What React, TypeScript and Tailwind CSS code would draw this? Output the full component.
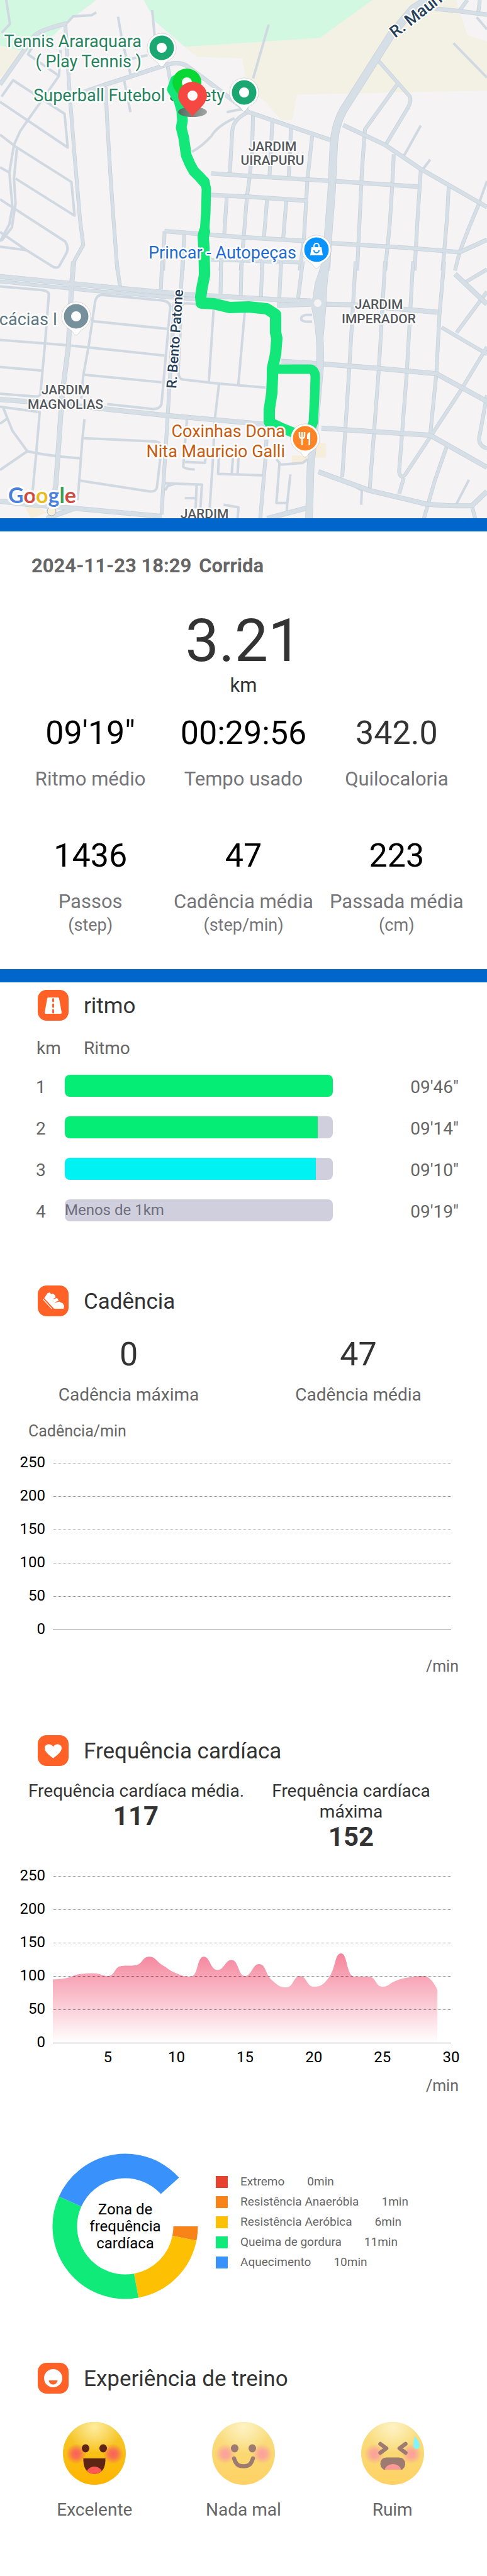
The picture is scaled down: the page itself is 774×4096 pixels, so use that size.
import type { ReactNode } from "react";

type Point = [number, number];

/* ---------- Map ---------- */

const northMinor = [
  "M20 0L32 140L5 190",
  "M310 72L295 88L235 95L215 135",
  "M380 97L395 250L420 430",
  "M490 58L498 210",
  "M865 143L815 455",
  "M400 470L420 650",
  "M0 590L218 855L208 660L42 465L5 560",
  "M0 780L50 850L230 1055L240 1250L50 1035",
  "M0 1155L210 1400Q225 1440 210 1480L190 1545Q180 1560 165 1540L85 1450L0 1345",
  "M0 1430L85 1450",
  "M195 290L190 440L65 760L45 840L30 1000L40 1200L30 1300L0 1400",
  "M190 440L90 315L115 240",
  "M0 970L30 1000",
  "M55 850L45 1035L50 1180L38 1320L5 1395",
  "M755 685Q700 730 680 790Q650 850 618 880",
  "M730 650L800 625",
  "M1355 727L1300 905",
  "M1385 925L1360 985",
  "M1460 250L1568 450",
  "M1568 1050L1545 1165",
  "M1535 100L1568 170",
  "M425 340L475 320",
];

const northStreets = [
  "M210 135L225 560L240 900L258 1280L268 1420L240 1510L235 1568",
  "M340 505L345 700L355 1000L365 1260L378 1568",
  "M540 385L550 480",
  "M815 650L812 850L805 1015L795 1140L785 1370L775 1568",
  "M800 650Q750 690 748 760L740 1000",
  "M877 700L868 1015",
  "M937 740L930 1020",
  "M1005 790L990 1040L978 1400L965 1568",
  "M730 1145L722 1360",
  "M860 1155L850 1375",
  "M922 1160L912 1380",
  "M530 1340L525 1568",
  "M593 1355L588 1568",
  "M680 1505L965 1522",
  "M712 1510L710 1568",
  "M845 1515L843 1568",
  "M905 1520L903 1568",
  "M1215 345L1320 560Q1325 580 1315 620L1240 845",
  "M1283 480L1175 750L1165 1000L1160 1200L1150 1568",
  "M1268 895L1262 1100L1255 1300L1240 1568",
  "M1355 985L1345 1250L1335 1568",
  "M1445 1070L1440 1250L1425 1568",
  "M1545 1170L1510 1320L1480 1460L1465 1568",
  "M1505 0L1480 60",
  "M1545 0L1540 70",
];

const northAvenues = [
  "M0 490L110 210Q125 175 215 135",
  "M260 540L340 490L520 385Q570 350 600 380L660 460L800 650L1070 815",
  "M680 1005L800 1020L1060 1048L1345 1082",
  "M680 1130L800 1140L985 1163",
  "M530 1340L780 1375L970 1395L1070 1410L1300 1435L1480 1462L1568 1390",
  "M1105 725L1240 840L1355 980L1568 1200",
  "M1400 50L1480 65L1568 85",
];

const northMajor = [
  "M1400 -30L1330 50L1260 200L1200 370L1105 640Q1080 720 1075 830L1068 1100L1055 1400L1050 1568",
];

const southMinor = [
  "M0 140L130 160Q160 165 157 190L145 460L130 745Q128 760 110 757L0 742",
  "M305 240Q308 185 330 188L520 218Q550 225 548 260L520 800Q515 830 490 828L345 800",
  "M305 240L285 480L268 640L262 770",
  "M300 335L537 378",
  "M0 440L220 470L530 528",
  "M270 635L520 678",
  "M0 592L135 612",
  "M640 240L600 235Q585 235 585 260L575 620Q575 660 590 663L700 685L855 708",
  "M688 265L672 685",
  "M788 285L767 700",
  "M705 690L692 880L685 1130L675 1390",
  "M0 815L128 845L116 1087L105 1290",
  "M10 820L40 950L88 1065Q150 1090 260 1105",
  "M88 1065L0 1170",
  "M0 910L25 880",
  "M272 885L265 1000L255 1230L250 1340",
  "M270 992L500 1010Q520 1012 520 1050L505 1270Q500 1295 480 1290L258 1230",
  "M602 885L590 1150Q590 1165 627 1167",
  "M595 1125L660 1130L663 1080",
  "M530 1245L650 1252L645 1395",
  "M532 1285L540 1260L560 1250",
  "M633 1255L630 1385",
  "M595 1328L628 1328",
  "M705 1080L702 1192L845 1200",
  "M750 1100L746 1195",
  "M768 1100L765 1195",
  "M720 1365L768 1380L765 1442",
  "M890 1110L905 1140L975 1130L990 1110",
  "M935 1195L925 1355L890 1355L900 1130",
  "M925 1355L923 1410",
  "M1005 300L985 300Q968 305 970 325Q972 340 1005 338",
  "M1510 1225L1470 1360",
  "M1130 1250L1165 1285L1163 1365",
];

const southStreets = [
  "M375 0L388 160",
  "M522 0L518 155",
  "M588 0L582 175",
  "M712 0L710 190",
  "M778 0L775 195",
  "M845 0L840 200",
  "M905 0L898 260",
  "M975 0L960 205",
  "M858 1000L855 1100L838 1442",
  "M0 112L300 165L640 215",
  "M1145 0L1125 590L1102 1210",
  "M1240 0L1220 600L1190 1285",
  "M1330 0L1310 620L1285 1180Q1290 1225 1305 1195L1385 985L1485 720L1568 480",
  "M1430 0L1415 300L1405 630L1385 975",
  "M1300 1215L1285 1305",
  "M1500 115L1568 45",
  "M1568 170L1470 400",
  "M1422 370L1568 520",
  "M1568 750L1545 970Q1535 1030 1568 1050",
  "M1440 1030L1400 1230L1365 1442",
  "M1520 1375L1530 1442",
  "M562 230L540 865L520 1420",
];

const southAvenues = [
  "M237 0L230 150L220 480L200 750L180 1250L165 1400",
  "M0 85L380 150L600 185L900 215L1000 222",
  "M900 245L1000 240",
  "M1050 240L1130 243L1410 285",
  "M0 775L200 800L350 830L540 865L860 915",
  "M0 1345L100 1365L240 1385L520 1430",
  "M240 1385L150 1442",
  "M860 1442L985 1385",
  "M905 560L1040 575L1220 600L1405 630L1568 785",
  "M1035 935L1200 955L1385 975L1568 1155",
  "M1465 70L1568 240",
  "M1025 1180L1190 1285L1370 1360Q1440 1375 1520 1370L1568 1290",
];

const southMajor = [
  "M1050 0L1025 130L1015 260Q1035 400 1030 600L1015 900L1000 1150L995 1442",
  "M1050 0L1042 130L1038 260L1030 420",
];

function Roads({ paths, width, cased }: { paths: string[]; width: number; cased?: boolean }) {
  return (
    <g fill="none" strokeLinejoin="round" strokeLinecap="butt">
      {cased &&
        paths.map((d) => (
          <path key={d} d={d} stroke="#c6d1db" strokeWidth={width + 1} vectorEffect="non-scaling-stroke" />
        ))}
      {paths.map((d) => (
        <path
          key={d}
          d={d}
          stroke={cased ? "#d6dfe6" : "#d0d9e1"}
          strokeWidth={cased ? width - 0.5 : width}
          vectorEffect="non-scaling-stroke"
        />
      ))}
    </g>
  );
}

function Poi({ x, y, color, children }: { x: number; y: number; color: string; children?: ReactNode }) {
  return (
    <g transform={`translate(${x} ${y})`}>
      <path
        d="M0 30C-2 30 -4 27 -6 24C-9 20 -23 16 -23 0A23 23 0 0 1 23 0C23 16 9 20 6 24C4 27 2 30 0 30Z"
        fill="#fff"
        stroke="#00000022"
      />
      <circle r="19.5" fill={color} />
      {children ?? <circle r="8" fill="#fff" />}
    </g>
  );
}

function Marker({ x, y, color }: { x: number; y: number; color: string }) {
  return (
    <g transform={`translate(${x} ${y})`}>
      <path d="M0 33C-3 25 -23 14 -23 -1A23 22 0 0 1 23 -1C23 14 3 25 0 33Z" fill={color} />
      <circle r="8" cy="-1" fill="#fff" />
    </g>
  );
}

function RouteMap() {
  return (
    <svg viewBox="0 0 774 824" className="block w-full" role="img" aria-label="Percurso da corrida">
      <defs>
        <linearGradient id="pinShadow">
          <stop offset="0" stopColor="#4d6d5c" />
          <stop offset="1" stopColor="#a5a5a5" />
        </linearGradient>
      </defs>
      <rect width="774" height="824" fill="#f5f3f4" />
      <g transform="scale(.4936 .2743)">
        <path d="M595 272L1030 220L1195 0H1568V525L957 548L940 695L905 695L860 600L795 500L780 338L635 330Z" fill="#f3f0e4" />
        <path d="M1470 0H1568V240L1505 205L1480 70Z" fill="#f5f3f4" />
        <path d="M463 0H1200L1030 220L595 272L500 125Z" fill="#d2f8e1" />
        <path d="M0 270L85 290L0 450Z" fill="#f3f0e4" />
        <path d="M0 0H310L215 130L175 200L85 300L0 265Z" fill="#d2f8e1" />
        <Roads paths={northMinor} width={4} />
        <Roads paths={northStreets} width={5} cased />
        <Roads paths={northAvenues} width={6} cased />
        <Roads paths={northMajor} width={12} cased />
      </g>
      <g transform="translate(0 415.7) scale(.4936 .2834)">
        <path d="M990 1020H1050V1100H1010V1130H940V1090H990Z" fill="#f6edda" />
        <path d="M80 1375L130 1385L150 1410L100 1442Z" fill="#f6edda" />
        <Roads paths={southMinor} width={4} />
        <Roads paths={southStreets} width={5} cased />
        <Roads paths={southAvenues} width={7} cased />
        <Roads paths={southMajor} width={11} cased />
      </g>
      <circle cx="505" cy="482" r="9" fill="#f5f3f4" stroke="#d6dfe6" strokeWidth="6" />
      <circle cx="82" cy="813" r="7" fill="#f6edda" stroke="#a9b2b8" />

      <g
        fontFamily="Roboto, sans-serif"
        fontSize="27"
        textAnchor="end"
        stroke="#fff"
        strokeWidth="5"
        strokeLinejoin="round"
        paintOrder="stroke"
      >
        <text x="225" y="75" fill="#27835e">Tennis Araraquara</text>
        <text x="225" y="107" fill="#27835e">( Play Tennis )</text>
        <text x="357" y="161" fill="#27835e">Superball Futebol Society</text>
      </g>

      <g fill="none" stroke="#14e779" strokeLinejoin="round" strokeLinecap="round">
        <path
          d="M279 128L274 142L284 158L289 176L290 192L288 203L292 219L296 247L302 261L308 272L317 281L325 290"
          strokeWidth="17"
        />
        <path d="M325 288L328 300L327 340L325 368" strokeWidth="15" />
        <path
          d="M325 368L323 376L324 392L325 430L325 438L321 458L319 472L320 482L340 483L365 489L395 488L424 491L438 500L438 529L440 538L438 563L433 586L433 600L432 625L428 651L428 671"
          strokeWidth="18"
        />
        <path d="M428 671L449 681L474 691" strokeWidth="16" />
        <path d="M435 587L493 587Q501 588 501 600L500 631L498 671L494 682" strokeWidth="15" />
      </g>

      <g
        fontFamily="Roboto, sans-serif"
        fontSize="27"
        textAnchor="end"
        stroke="#fff"
        strokeWidth="5"
        strokeLinejoin="round"
        paintOrder="stroke"
      >
        <text x="471" y="411" fill="#1f6bd0">Princar - Autopeças</text>
        <text x="91" y="517" fill="#5c7580">cácias I</text>
        <text x="453" y="695" fill="#c75b10">Coxinhas Dona</text>
        <text x="453" y="727" fill="#c75b10">Nita Mauricio Galli</text>
      </g>
      <g
        fontFamily="Roboto, sans-serif"
        fontSize="21"
        fontWeight="500"
        fill="#54575b"
        textAnchor="middle"
        stroke="#fff"
        strokeWidth="4"
        strokeLinejoin="round"
        paintOrder="stroke"
      >
        <text x="433" y="240">JARDIM</text>
        <text x="433" y="262">UIRAPURU</text>
        <text x="602" y="491">JARDIM</text>
        <text x="602" y="514">IMPERADOR</text>
        <text x="104" y="627">JARDIM</text>
        <text x="104" y="650">MAGNOLIAS</text>
        <text x="325" y="824">JARDIM</text>
      </g>
      <g
        fontFamily="Roboto, sans-serif"
        fontWeight="500"
        fill="#26405a"
        stroke="#fff"
        strokeWidth="4"
        strokeLinejoin="round"
        paintOrder="stroke"
      >
        <text transform="translate(628 61) rotate(-38)" fontSize="26">R. Maurício</text>
        <text transform="translate(280 618) rotate(-86)" fontSize="22">R. Bento Patone</text>
      </g>

      <Poi x={257} y={76} color="#1aa772" />
      <Poi x={388} y={147} color="#1aa772" />
      <Poi x={121} y={503} color="#76909c" />
      <Poi x={503} y={397} color="#0a93ff">
        <path d="M-8 -4H8L10 9H-10Z" fill="#fff" />
        <path d="M-4 -4V-6A4 4 0 0 1 4 -6V-4" fill="none" stroke="#fff" strokeWidth="2" />
        <path d="M-4 1A4 4 0 0 0 4 1" fill="none" stroke="#0a93ff" strokeWidth="2" />
      </Poi>
      <Poi x={485} y={697} color="#ff8426">
        <path d="M-9 -10V-4Q-9 0 -5 0Q-1 0 -1 -4V-10M-5 -10V11" fill="none" stroke="#fff" strokeWidth="2.4" />
        <path d="M8 11H5.500V1H3V-4Q3 -9 8 -10Z" fill="#fff" />
      </Poi>

      <Marker x={297} y={132} color="#09d834" />
      <ellipse cx="306" cy="178" rx="23" ry="8" fill="url(#pinShadow)" />
      <Marker x={306} y={153} color="#f54843" />

      <text
        x="13"
        y="800"
        fontFamily="Lato, sans-serif"
        fontWeight="700"
        fontSize="34"
        stroke="#fff"
        strokeWidth="6"
        strokeLinejoin="round"
        paintOrder="stroke"
      >
        <tspan fill="#4a80dd">G</tspan>
        <tspan fill="#d04a41">o</tspan>
        <tspan fill="#eabb1e">o</tspan>
        <tspan fill="#4a80dd">g</tspan>
        <tspan fill="#3ba05a">l</tspan>
        <tspan fill="#d04a41">e</tspan>
      </text>
    </svg>
  );
}

/* ---------- Shared parts ---------- */

function SectionTitle({ icon, children }: { icon: ReactNode; children: ReactNode }) {
  return (
    <div className="flex items-center gap-6 pl-[60px]">
      <svg viewBox="0 0 49 49" className="size-[49px] rounded-[14px] bg-[#ff6127]" aria-hidden="true">
        {icon}
      </svg>
      <h2 className="pt-[2px] text-[35px] leading-[47px] text-[#333]">{children}</h2>
    </div>
  );
}

function Divider() {
  return <div className="h-[21px] bg-[#0066cc]" />;
}

const roadIcon = (
  <>
    <path d="M17 12H32Q34 12 34 14L38 36Q38 38 36 38H13Q11 38 11 36L15 14Q15 12 17 12Z" fill="#fff" />
    <path d="M24.500 14.500V18M24.500 23V27M24.500 32V36" stroke="#ff6127" strokeWidth="3" strokeLinecap="round" />
  </>
);

const shoeIcon = (
  <g transform="scale(.239) translate(-10 -14)">
    <path
      d="M56 98L76 68L88 63L98 74L112 71L122 80L126 92L112 100L113 108L138 100L146 114L120 124L121 132L152 124L176 136L183 150L180 166L120 166Z"
      fill="#fff"
      stroke="#fff"
      strokeWidth="5"
      strokeLinejoin="round"
    />
    <path d="M47 107L103 168" stroke="#fff" strokeWidth="5" strokeLinecap="round" />
  </g>
);

const heartIcon = (
  <path
    d="M24.500 37C22 34 11 28 11 20.500C11 17 14 14.500 17.500 14.500C20.500 14.500 23 16 24.500 18.500C26 16 28.500 14.500 31.500 14.500C35 14.500 38 17 38 20.500C38 28 27 34 24.500 37Z"
    fill="#fff"
  />
);

const smileIcon = (
  <>
    <circle cx="24.500" cy="24.500" r="14.500" fill="#fff" />
    <path d="M17.500 28H31.500C31 32 28 34.500 24.500 34.500S18 32 17.500 28Z" fill="#ff6127" />
  </>
);

/* ---------- Charts ---------- */

const heartRate = [
  95, 97, 103, 104, 100, 115, 116, 129, 116, 104, 99, 129, 109, 124, 100, 118, 93, 83, 100, 84, 95, 134, 99, 99, 84,
  93, 98, 100, 79,
];

const clamp = (v: number, a: number, b: number) => Math.max(Math.min(a, b), Math.min(Math.max(a, b), v));

function smoothLine(points: Point[]) {
  let d = `M${points[0][0]} ${points[0][1]}`;
  let out: Point = points[0];
  for (let i = 1; i < points.length; i++) {
    const prev = points[i - 1];
    const cur = points[i];
    const next = points[i + 1];
    let into: Point = cur;
    let nextOut: Point = cur;
    if (next) {
      const lenPrev = Math.hypot(cur[0] - prev[0], cur[1] - prev[1]);
      const lenNext = Math.hypot(next[0] - cur[0], next[1] - cur[1]);
      const ratio = lenNext / (lenNext + lenPrev);
      const vx = (next[0] - prev[0]) * 0.5;
      const vy = (next[1] - prev[1]) * 0.5;
      nextOut = [clamp(cur[0] + vx * ratio, cur[0], next[0]), clamp(cur[1] + vy * ratio, cur[1], next[1])];
      into = [
        clamp(cur[0] - ((nextOut[0] - cur[0]) * lenPrev) / lenNext, prev[0], cur[0]),
        clamp(cur[1] - ((nextOut[1] - cur[1]) * lenPrev) / lenNext, prev[1], cur[1]),
      ];
      nextOut = [
        cur[0] + ((cur[0] - into[0]) * lenNext) / lenPrev,
        cur[1] + ((cur[1] - into[1]) * lenNext) / lenPrev,
      ];
    }
    d += `C${out[0]} ${out[1]} ${into[0]} ${into[1]} ${cur[0]} ${cur[1]}`;
    out = nextOut;
  }
  return d;
}

function Chart({ label, data, ticks = [] }: { label: string; data?: number[]; ticks?: number[] }) {
  const left = 84;
  const right = 717;
  const base = 300;
  const y = (v: number) => base - (v * 265) / 250;
  const x = (minute: number) => left + ((minute - 1) * (right - left)) / 29;
  const line = data && smoothLine(data.map((v, i): Point => [x(i + 1), y(v)]));
  return (
    <svg viewBox="0 0 774 340" className="block w-full" role="img" aria-label={label}>
      <defs>
        <linearGradient id="rateFill" x1="0" y1="0" x2="0" y2="1">
          <stop offset="0" stopColor="#f5849c" />
          <stop offset="1" stopColor="#fff" />
        </linearGradient>
      </defs>
      {line && <path d={`${line}V${base}H${left}Z`} fill="url(#rateFill)" />}
      <g fontFamily="Roboto, sans-serif" fontSize="24">
        {[250, 200, 150, 100, 50, 0].map((v) => (
          <g key={v}>
            <line
              x1={left}
              x2={right}
              y1={y(v) + 0.5}
              y2={y(v) + 0.5}
              stroke={v ? "#00000070" : "#999"}
              strokeDasharray={v ? "1 1" : undefined}
            />
            <text x="72" y={y(v) + 7} textAnchor="end">
              {v}
            </text>
          </g>
        ))}
        {ticks.map((t) => (
          <text key={t} x={x(t)} y="331" textAnchor="middle">
            {t}
          </text>
        ))}
      </g>
    </svg>
  );
}

const zones = [
  { name: "Extremo", minutes: 0, swatch: "bg-[#e5422f]", color: "#e5422f" },
  { name: "Resistência Anaeróbia", minutes: 1, swatch: "bg-[#f88319]", color: "#f88319" },
  { name: "Resistência Aeróbica", minutes: 6, swatch: "bg-[#fdc003]", color: "#fdc003" },
  { name: "Queima de gordura", minutes: 11, swatch: "bg-[#0fea79]", color: "#0fea79" },
  { name: "Aquecimento", minutes: 10, swatch: "bg-[#3991fb]", color: "#3991fb" },
];

function ZoneRing() {
  const radius = 96;
  const at = (deg: number) => {
    const a = (deg * Math.PI) / 180;
    return `${116 + radius * Math.cos(a)} ${116 + radius * Math.sin(a)}`;
  };
  let start = 0;
  return (
    <svg viewBox="0 0 232 232" className="size-[232px]" aria-hidden="true">
      {zones.map((z) => {
        const from = start;
        start += z.minutes * 11.35;
        return z.minutes ? (
          <path
            key={z.name}
            d={`M${at(from)}A${radius} ${radius} 0 ${start - from > 180 ? 1 : 0} 1 ${at(start)}`}
            fill="none"
            stroke={z.color}
            strokeWidth="39"
          />
        ) : null;
      })}
    </svg>
  );
}

/* ---------- Faces ---------- */

function Face({ children }: { children: ReactNode }) {
  return (
    <svg viewBox="0 0 100 100" className="size-[100px]" aria-hidden="true">
      <defs>
        <linearGradient id="faceBase" x1="0" y1="0" x2="0" y2="1">
          <stop offset="0" stopColor="#f3cc3c" />
          <stop offset=".5" stopColor="#f8bf14" />
          <stop offset="1" stopColor="#ffb400" />
        </linearGradient>
        <radialGradient id="faceShine" cx=".5" cy=".08" r=".42">
          <stop offset="0" stopColor="#ffeb9c" />
          <stop offset="1" stopColor="#ffeb9c" stopOpacity="0" />
        </radialGradient>
        <radialGradient id="blush">
          <stop offset="0" stopColor="#f9605c" />
          <stop offset=".4" stopColor="#f9605c" stopOpacity=".8" />
          <stop offset="1" stopColor="#f9605c" stopOpacity="0" />
        </radialGradient>
      </defs>
      <circle cx="50" cy="50" r="50" fill="url(#faceBase)" />
      <circle cx="50" cy="50" r="50" fill="url(#faceShine)" />
      <circle cx="21" cy="51" r="16" fill="url(#blush)" />
      <circle cx="80" cy="51" r="16" fill="url(#blush)" />
      {children}
    </svg>
  );
}

const roundEyes = (
  <>
    <ellipse cx="36" cy="42" rx="6" ry="6.500" fill="#5e2414" />
    <ellipse cx="64" cy="42" rx="6" ry="6.500" fill="#5e2414" />
  </>
);

const moods = [
  {
    name: "Excelente",
    selected: true,
    drawing: (
      <>
        <clipPath id="grin">
          <path d="M32.500 58H67.500V62C67 76 60 82.500 50 82.500S33 76 32.500 62Z" />
        </clipPath>
        {roundEyes}
        <g clipPath="url(#grin)">
          <rect x="30" y="55" width="40" height="30" fill="#5e2414" />
          <ellipse cx="50" cy="83" rx="13" ry="12" fill="#fd5854" />
        </g>
      </>
    ),
  },
  {
    name: "Nada mal",
    selected: false,
    drawing: (
      <>
        {roundEyes}
        <path
          d="M35 58C38 68 42 70.500 50 70.500S62 68 65 58"
          fill="none"
          stroke="#5e2414"
          strokeWidth="6.500"
          strokeLinecap="round"
        />
      </>
    ),
  },
  {
    name: "Ruim",
    selected: false,
    drawing: (
      <>
        <path
          d="M30.500 35L40 42L30.500 49M70.500 35L61 42L70.500 49"
          fill="none"
          stroke="#5e2414"
          strokeWidth="6.500"
          strokeLinecap="round"
          strokeLinejoin="round"
        />
        <clipPath id="shout">
          <path d="M40 56.500H60Q70 57 70 67Q70 72 65 76H36Q30.500 72 30.500 67Q30.500 57 40 56.500Z" />
        </clipPath>
        <g clipPath="url(#shout)">
          <rect x="28" y="55" width="44" height="22" fill="#5e2414" />
          <ellipse cx="50.500" cy="77" rx="13" ry="10" fill="#fd5854" />
        </g>
        <path d="M85 23C90 28 93 33 93 38A5 5 0 0 1 83 38C83 33 84 28 85 23Z" fill="#2ff0ff" />
      </>
    ),
  },
];

/* ---------- Data ---------- */

const topStats = [
  { value: "09'19\"", label: "Ritmo médio", tone: "text-black" },
  { value: "00:29:56", label: "Tempo usado", tone: "text-black" },
  { value: "342.0", label: "Quilocaloria", tone: "text-[#333]" },
];

const bottomStats = [
  { value: "1436", label: "Passos", unit: "(step)" },
  { value: "47", label: "Cadência média", unit: "(step/min)" },
  { value: "223", label: "Passada média", unit: "(cm)" },
];

const splits = [
  { km: 1, percent: 100, fill: "bg-[#05ed75]", pace: "09'46\"" },
  { km: 2, percent: 94.5, fill: "bg-[#05ed75]", pace: "09'14\"" },
  { km: 3, percent: 93.8, fill: "bg-[#00f3f2]", pace: "09'10\"" },
  { km: 4, percent: 0, fill: "", pace: "09'19\"", note: "Menos de 1km" },
];

export default function App() {
  return (
    <main className="bg-white pb-[87px] font-[Roboto,sans-serif]">
      <RouteMap />
      <Divider />

      <section className="pt-[35px] pb-[52px]">
        <h1 className="flex gap-3 pl-[50px] text-[31px] leading-10 font-bold text-[#666]">
          <span>2024-11-23 18:29</span>
          <span>Corrida</span>
        </h1>
        <p className="mt-[51px] text-center text-[95px] leading-[96px] text-[#333]">3.21</p>
        <p className="mt-[3px] text-center text-[31px] leading-10 text-[#333]">km</p>
        <dl className="mt-[26px] grid grid-cols-3 px-[22px] text-center">
          {topStats.map((s) => (
            <div key={s.label} className="flex flex-col-reverse gap-[23px]">
              <dt className="text-[31px] leading-10 whitespace-nowrap text-[#757579]">{s.label}</dt>
              <dd className={`text-[52px] leading-[60px] ${s.tone}`}>{s.value}</dd>
            </div>
          ))}
        </dl>
        <dl className="mt-[72px] grid grid-cols-3 px-[22px] text-center">
          {bottomStats.map((s) => (
            <div key={s.label} className="flex flex-col-reverse gap-[23px]">
              <dt className="text-[31px] leading-10 whitespace-nowrap text-[#757579]">
                {s.label}
                <span className="block text-[27px] leading-[35px]">{s.unit}</span>
              </dt>
              <dd className="text-[52px] leading-[60px] text-black">{s.value}</dd>
            </div>
          ))}
        </dl>
      </section>
      <Divider />

      <section className="pt-3">
        <SectionTitle icon={roadIcon}>ritmo</SectionTitle>
        <table className="mt-[26px] w-full table-fixed text-[28px] text-[#666]">
          <thead>
            <tr className="h-[60px] text-left align-top leading-9">
              <th scope="col" className="w-[103px] p-0 pl-[58px] font-normal">
                km
              </th>
              <th scope="col" className="w-[55%] p-0 pl-[30px] font-normal">
                Ritmo
              </th>
              <td />
            </tr>
          </thead>
          <tbody>
            {splits.map((s) => (
              <tr key={s.km} className="h-[66px] align-top leading-10">
                <td className="p-0 pl-[57px]">{s.km}</td>
                <td className="p-0">
                  <div className="h-[35px] overflow-hidden rounded-lg bg-[#d0cfde] text-2xl leading-[35px] text-[#6f6e7d]">
                    {s.note ?? <div className={`h-full ${s.fill}`} style={{ width: `${s.percent}%` }} />}
                  </div>
                </td>
                <td className="p-0 pr-[45px] text-right">{s.pace}</td>
              </tr>
            ))}
          </tbody>
        </table>
      </section>

      <section className="mt-[71px]">
        <SectionTitle icon={shoeIcon}>Cadência</SectionTitle>
        <dl className="mt-[31px] grid grid-cols-2 px-[22px] text-center">
          {[
            ["Cadência máxima", "0"],
            ["Cadência média", "47"],
          ].map(([label, value]) => (
            <div key={label} className="flex flex-col-reverse gap-4">
              <dt className="text-[28px] leading-9 text-[#666]">{label}</dt>
              <dd className="text-[52px] leading-[60px] text-[#333]">{value}</dd>
            </div>
          ))}
        </dl>
        <p className="mt-[25px] pl-[45px] text-[25px] leading-[30px] text-[#666]">Cadência/min</p>
        <Chart label="Cadência por minuto" />
        <p className="mt-1 pr-[45px] text-right text-[25px] leading-[30px] text-[#666]">/min</p>
      </section>

      <section className="mt-[94px]">
        <SectionTitle icon={heartIcon}>Frequência cardíaca</SectionTitle>
        <dl className="mt-[23px] grid grid-cols-2 px-[45px] text-center text-[#333]">
          {[
            ["Frequência cardíaca média.", "117"],
            ["Frequência cardíaca máxima", "152"],
          ].map(([label, value]) => (
            <div key={value}>
              <dt className={value === "152" ? "px-10 text-[28px] leading-[33px]" : "text-[28px] leading-[33px] whitespace-nowrap"}>
                {label}
              </dt>
              <dd className="text-[42px] leading-[48px] font-bold">{value}</dd>
            </div>
          ))}
        </dl>
        <div className="mt-[3px]">
          <Chart label="Frequência cardíaca por minuto" data={heartRate} ticks={[5, 10, 15, 20, 25, 30]} />
        </div>
        <p className="mt-[14px] pr-[45px] text-right text-[25px] leading-[30px] text-[#666]">/min</p>

        <div className="mt-[92px] flex items-start gap-7 pl-[83px]">
          <div className="grid place-items-center *:col-start-1 *:row-start-1">
            <ZoneRing />
            <h3 className="w-[120px] text-center text-2xl leading-[27px] text-black">Zona de frequência cardíaca</h3>
          </div>
          <ul className="pt-[29px] text-[19px] leading-8 text-[#666]">
            {zones.map((z) => (
              <li key={z.name} className="flex items-center">
                <span className={`size-[19px] ${z.swatch}`} />
                <span className="pr-9 pl-5">{z.name}</span>
                <span>{z.minutes}min</span>
              </li>
            ))}
          </ul>
        </div>
      </section>

      <section className="mt-[101px]">
        <SectionTitle icon={smileIcon}>Experiência de treino</SectionTitle>
        <div className="mt-[45px] grid grid-cols-3 px-8">
          {moods.map((m) => (
            <button
              key={m.name}
              type="button"
              aria-pressed={m.selected}
              className="flex flex-col items-center gap-[22px] text-[28px] leading-9 text-[#666]"
            >
              <span className={m.selected ? "" : "opacity-60"}>
                <Face>{m.drawing}</Face>
              </span>
              {m.name}
            </button>
          ))}
        </div>
      </section>
    </main>
  );
}
